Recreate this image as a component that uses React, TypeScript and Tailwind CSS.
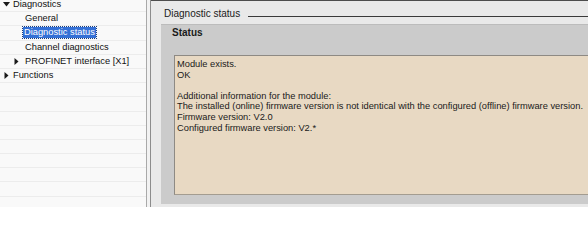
import React from 'react';

type NavItem = {
  label: string;
  indent: number;
  arrow?: 'down' | 'right';
  selected?: boolean;
};

const NAV: NavItem[] = [
  { label: 'Diagnostics', indent: 0, arrow: 'down' },
  { label: 'General', indent: 1 },
  { label: 'Diagnostic status', indent: 1, selected: true },
  { label: 'Channel diagnostics', indent: 1 },
  { label: 'PROFINET interface [X1]', indent: 1, arrow: 'right' },
  { label: 'Functions', indent: 0, arrow: 'right' },
];

const EMPTY_ROWS = 9;

const STATUS_LINES = [
  'Module exists.',
  'OK',
  '',
  'Additional information for the module:',
  'The installed (online) firmware version is not identical with the configured (offline) firmware version.',
  'Firmware version: V2.0',
  'Configured firmware version: V2.*',
];

function Arrow({ dir }: { dir: 'down' | 'right' }) {
  if (dir === 'down') {
    return (
      <svg width="7" height="5" viewBox="0 0 7 5" className="shrink-0">
        <path d="M0 0 H7 L3.5 4.5 Z" fill="#1a1a1a" />
      </svg>
    );
  }
  return (
    <svg width="5" height="7" viewBox="0 0 5 7" className="shrink-0">
      <path d="M0.5 0 V7 L4.5 3.5 Z" fill="#1a1a1a" />
    </svg>
  );
}

export default function App() {
  return (
    <div className="flex h-[207px] w-[588px] overflow-hidden bg-[#e9e9e9] font-['Liberation_Sans',Arial,sans-serif] text-[9.3px] text-[#111]">
      {/* tree */}
      <aside className="w-[147px] shrink-0 bg-[#f9f9f9] border-r border-[#a9a9a9]">
        <div className="-mt-[2px]">
          {NAV.map((item) => (
            <div
              key={item.label}
              className="flex h-[14.2px] items-center border-b border-[#ececec]"
            >
              <div
                className={
                  item.indent === 0
                    ? 'flex w-[13px] justify-center'
                    : 'flex w-[25px] justify-end pr-[6px]'
                }
              >
                {item.arrow && <Arrow dir={item.arrow} />}
              </div>
              {item.selected ? (
                <span className="-ml-[2px] bg-[#3470d6] px-[1px] leading-[11px] text-white outline outline-1 outline-dotted outline-[#1b3d7a]">
                  {item.label}
                </span>
              ) : (
                <span className="leading-[11px]">{item.label}</span>
              )}
            </div>
          ))}
          {Array.from({ length: EMPTY_ROWS }).map((_, i) => (
            <div key={i} className="h-[14.2px] border-b border-[#ececec]" />
          ))}
        </div>
      </aside>

      {/* splitter */}
      <div className="w-[4px] shrink-0 bg-[#f2f2f2] border-r border-[#8c8c8c]" />

      {/* content */}
      <main className="flex min-w-0 flex-1 flex-col border-t border-[#4d4d4d]">
        <div className="flex h-[22px] items-end pl-[13px] pb-[3px]">
          <span className="whitespace-nowrap text-[10px] leading-[12px] text-[#1a1a1a]">
            Diagnostic status
          </span>
          <div className="mb-[3px] ml-[8px] h-[1px] flex-1 bg-[#3a3a3a]" />
        </div>

        <section className="ml-[10px] mt-[1px] flex h-[180px] flex-col border-t border-[#bcbcbc] bg-[#cbcbcb]">
          <div className="h-[30px] pl-[11px] pt-[2px]">
            <span className="text-[10px] font-bold leading-[12px] text-[#1a1a1a]">Status</span>
          </div>
          <div className="ml-[13px] h-[140px] border-l border-t border-b border-[#8e8a84] border-b-[#a39c90] bg-[#e8d9c3] pl-[2px] pt-[3px] leading-[10.6px] text-[#1a1a1a]">
            {STATUS_LINES.map((line, i) => (
              <div key={i} className="h-[10.6px] whitespace-nowrap">
                {line}
              </div>
            ))}
          </div>
        </section>
      </main>
    </div>
  );
}
